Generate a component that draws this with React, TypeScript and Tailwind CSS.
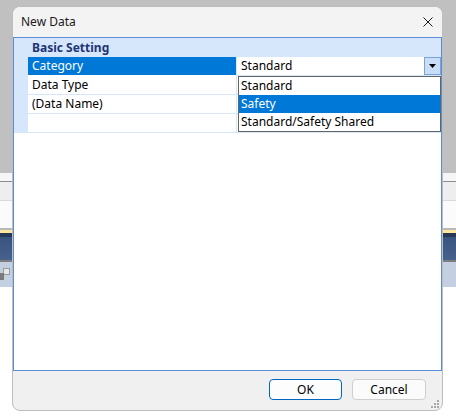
import React from "react";

function BgApp() {
  return (
    <div className="flex flex-col w-full">
      <div className="h-[173px] bg-[#c0c0c0]" />
      <div className="h-[8px] bg-[#f6f6f6]" />
      <div className="h-px bg-[#8c8c8c]" />
      <div className="h-[19px] bg-[#eeeeee] border-b border-[#dadada]" />
      <div className="h-[27px] bg-[#fbfbfb]" />
      <div className="h-[2px] bg-[#b8b8b8]" />
      <div className="h-[3px] bg-[#ffe6a0]" />
      <div className="h-[4px] bg-[#2a3858]" />
      <div className="h-[23px] bg-gradient-to-b from-[#3a5480] to-[#46618b]" />
      <div className="h-[2px] bg-[#7d7d7d]" />
      <div className="h-[25px] bg-[#c4d0e1] flex items-center">
        <svg width="12" height="14" viewBox="0 0 12 14" className="ml-0">
          <rect x="3.5" y="0.5" width="6" height="6" fill="#e8e8e8" stroke="#9a9a9a" />
          <rect x="0" y="5" width="4" height="7" fill="#7a7a7a" />
        </svg>
      </div>
    </div>
  );
}

export default function App() {
  return (
    <div className="relative w-[456px] h-[419px] overflow-hidden bg-white font-['Noto_Sans',sans-serif] text-[12px] text-black">
      <BgApp />
      <div className="absolute left-[12px] top-[6px] w-[431px] h-[405px] rounded-[8px] border border-[#bdbdbd] bg-[#f0f0f0] overflow-hidden flex flex-col">
        <div className="h-[30px] bg-[#f3f3f3] flex items-center justify-between pl-[8px] pr-[9px] shrink-0">
          <span className="leading-none text-[#1a1a1a]">New Data</span>
          <svg width="10" height="10" viewBox="0 0 10 10">
            <path d="M0.5 0.5 L9.5 9.5 M9.5 0.5 L0.5 9.5" stroke="#1a1a1a" strokeWidth="1" />
          </svg>
        </div>
        <div className="flex-1 border border-[#5b8dd8] bg-white flex flex-col">
          <div className="h-[19px] bg-[#d6e6fb] pl-[18px] flex items-center font-bold text-[#1d3475]">
            Basic Setting
          </div>
          <div className="flex h-[19px]">
            <div className="w-[14px] bg-[#d6e6fb]" />
            <div className="w-[208px] h-[18px] bg-[#0078d7] text-white pl-[4px] flex items-center">Category</div>
            <div className="w-px bg-[#d6e6fb]" />
            <div className="relative w-[204px] flex flex-col">
              <div className="h-[18px] flex items-center justify-between pl-[4px]">
                <span>Standard</span>
                <div className="w-[17px] h-[18px] bg-[#c9def6] border border-[#7aa3dc] flex items-center justify-center">
                  <svg width="7" height="4" viewBox="0 0 7 4">
                    <path d="M0 0 H7 L3.5 4 Z" fill="#000" />
                  </svg>
                </div>
              </div>
              <div className="h-px bg-[#d6e6fb]" />
              <div className="absolute left-[1px] top-[19px] w-[203px] border border-[#646464] bg-white z-10 flex flex-col">
                <div className="h-[18px] pl-[2px] flex items-center">Standard</div>
                <div className="h-[18px] pl-[2px] flex items-center bg-[#0078d7] text-white">Safety</div>
                <div className="h-[18px] pl-[2px] flex items-center">Standard/Safety Shared</div>
              </div>
            </div>
          </div>
          {["Data Type", "(Data Name)", ""].map((label, i) => (
            <div key={i} className="flex h-[19px]">
              <div className="w-[14px] bg-[#d6e6fb]" />
              <div className="w-[208px] flex flex-col">
                <div className="h-[18px] pl-[4px] flex items-center">{label}</div>
                <div className="h-px bg-[#d6e6fb]" />
              </div>
              <div className="w-px bg-[#d6e6fb]" />
              <div className="w-[204px] flex flex-col">
                <div className="h-[18px]" />
                <div className="h-px bg-[#d6e6fb]" />
              </div>
            </div>
          ))}
        </div>
        <div className="h-[39px] shrink-0 flex justify-end items-start pt-[8px] pr-[16px] gap-[10px] relative">
          <button className="w-[73px] h-[21px] rounded-[4px] border border-[#0067c0] bg-[#fdfdfd] flex items-center justify-center leading-none">
            OK
          </button>
          <button className="w-[74px] h-[21px] rounded-[4px] border border-[#cfcfcf] bg-[#fbfbfb] flex items-center justify-center leading-none">
            Cancel
          </button>
          <svg className="absolute right-[3px] bottom-[2px]" width="8" height="8" viewBox="0 0 8 8">
            <rect x="6" y="0" width="2" height="2" fill="#a8a8a8" />
            <rect x="3" y="3" width="2" height="2" fill="#a8a8a8" />
            <rect x="6" y="3" width="2" height="2" fill="#a8a8a8" />
            <rect x="0" y="6" width="2" height="2" fill="#a8a8a8" />
            <rect x="3" y="6" width="2" height="2" fill="#a8a8a8" />
            <rect x="6" y="6" width="2" height="2" fill="#a8a8a8" />
          </svg>
        </div>
      </div>
    </div>
  );
}
